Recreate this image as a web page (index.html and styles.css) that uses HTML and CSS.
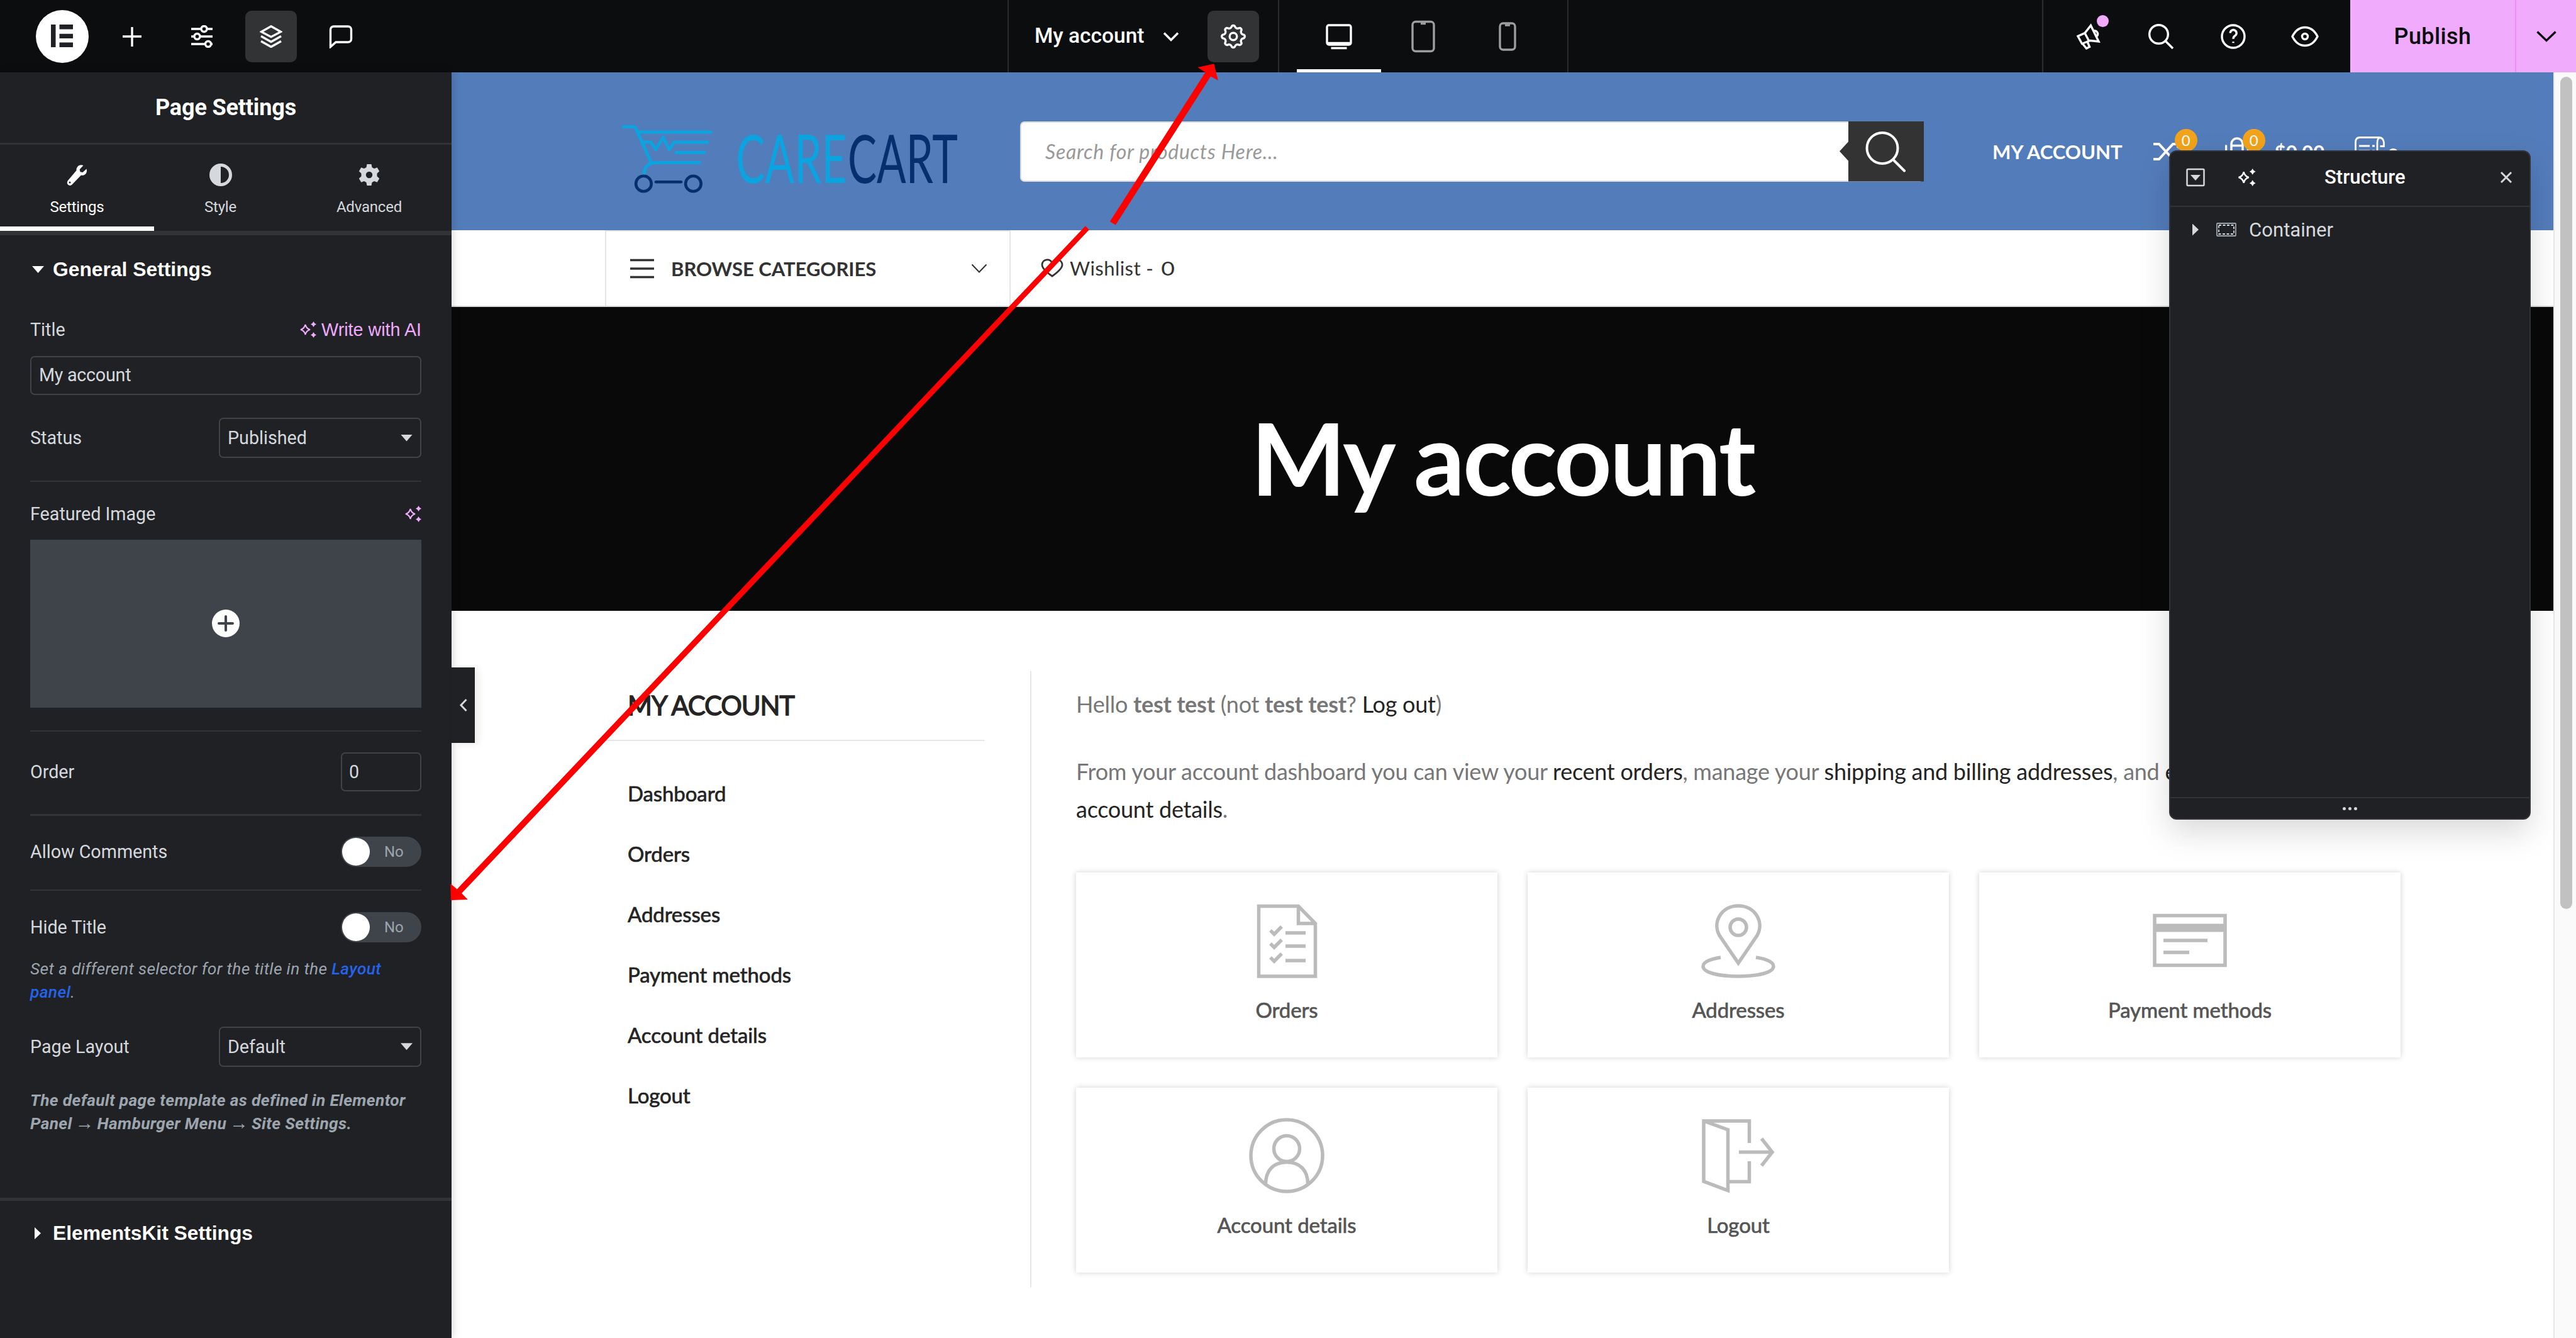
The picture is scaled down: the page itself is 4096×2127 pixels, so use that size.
FILE: index.html
```html
<!DOCTYPE html>
<html lang="en">

<head>
    <meta charset="utf-8">
    <meta name="viewport" content="width=device-width, initial-scale=1.0">
    <title>Elementor | My account</title>
    <link rel="stylesheet" href="styles.css">
</head>

<body>
    <header class="topbar">
        <div class="tools">
            <span class="logo">
                <svg width="84" height="84" viewBox="0 0 84 84"><circle cx="42" cy="42" r="42" fill="#fff"/><path d="M24 23h7.500v36H24zM37.500 23H59v7.500H37.500zM37.500 37.700H59v7.300H37.500zM37.500 51.500H59V59H37.500z" fill="#1f2124"/></svg>
            </span>
            <button class="tool">
                <svg width="36" height="36" viewBox="0 0 36 36"><path d="M18 3v31M3 18h30" class="line"/></svg>
            </button>
            <button class="tool">
                <svg width="36" height="36" viewBox="0 0 36 36"><path d="M1 6h15M27 6h8M1 30h21M32 30h3M1 18h5M16 18h19" class="line"/><circle cx="21.500" cy="6" r="4.500" class="line"/><circle cx="10.500" cy="18" r="4.500" class="line"/><circle cx="28" cy="30" r="4.500" class="line"/></svg>
            </button>
            <button class="tool active">
                <svg width="36" height="36" viewBox="0 0 36 36"><path d="M18 1.800L33.500 10.500 18 18.700 2.500 10.500zM2 17.500l16 9 16-9M2 25.500l16 9 16-9" class="line"/></svg>
            </button>
            <button class="tool">
                <svg width="38" height="38" viewBox="0 0 38 38"><path d="M2.500 35.500V8a5 5 0 0 1 5-5h23a5 5 0 0 1 5 5v15a5 5 0 0 1-5 5H11z" class="line"/></svg>
            </button>
        </div>
        <div class="document">
            <span class="document-name">My account</span>
            <svg width="26" height="16" viewBox="0 0 26 16"><path d="M2 2.500l11 11 11-11" class="line"/></svg>
            <button class="tool active">
                <svg width="42" height="42" viewBox="0 0 42 42"><path d="M18.300 5.300a2.900 2.900 0 0 1 5.400 0 4.300 4.300 0 0 0 6.100 2.500 2.900 2.900 0 0 1 3.900 3.900 4.300 4.300 0 0 0 2.500 6.200 2.900 2.900 0 0 1 0 6.200 4.300 4.300 0 0 0-2.500 6.200 2.900 2.900 0 0 1-3.900 3.900 4.300 4.300 0 0 0-6.100 2.500 2.900 2.900 0 0 1-5.400 0 4.300 4.300 0 0 0-6.100-2.500 2.900 2.900 0 0 1-3.900-3.900 4.300 4.300 0 0 0-2.500-6.200 2.900 2.900 0 0 1 0-6.200 4.300 4.300 0 0 0 2.500-6.200 2.900 2.900 0 0 1 3.900-3.900 4.300 4.300 0 0 0 6.100-2.500z" class="line"/><circle cx="21" cy="21" r="5.800" class="line"/></svg>
            </button>
        </div>
        <div class="devices">
            <button class="device selected">
                <svg width="42" height="42" viewBox="0 0 42 42"><rect x="2" y="3" width="38" height="31" rx="3" class="line"/><path d="M1 31.500h40M8.500 39.500h25" class="line"/></svg>
            </button>
            <button class="device">
                <svg width="38" height="52" viewBox="0 0 38 52"><rect x="2" y="2.500" width="34" height="47" rx="5" class="line"/><path d="M15 5.500h8" class="line"/></svg>
            </button>
            <button class="device">
                <svg width="28" height="46" viewBox="0 0 28 46"><rect x="2" y="2" width="24" height="42" rx="5" class="line"/><path d="M10 5h8" class="line"/></svg>
            </button>
        </div>
        <div class="spacer"></div>
        <div class="actions">
            <button class="tool">
                <svg width="42" height="42" viewBox="0 0 42 42"><path d="M24.500 3.500L37 29 23.500 27.500 10.500 32.500 4 20.500 15 15.500zM15 15.500l6.500 12.500M11.500 32.500l6 7.500 5-2.500-3.500-8.500M29.500 12c5-1 8 5.500 4.500 8.500" class="line"/></svg>
                <i class="notice"></i>
            </button>
            <button class="tool">
                <svg width="40" height="40" viewBox="0 0 40 40"><circle cx="16.500" cy="16.500" r="14.800" class="line"/><path d="M27 27l12 12" class="line"/></svg>
            </button>
            <button class="tool">
                <svg width="40" height="40" viewBox="0 0 40 40"><circle cx="20" cy="20" r="18" class="line"/><path d="M15.200 14.500a5 5 0 1 1 7.800 4.200c-2 1.300-3 2.200-3 5M20 28.300v2" class="line"/></svg>
            </button>
            <button class="tool">
                <svg width="44" height="34" viewBox="0 0 44 34"><path d="M2 17C7 7 14 2.500 22 2.500S37 7 42 17c-5 10-12 14.500-20 14.500S7 27 2 17z" class="line"/><circle cx="22" cy="17" r="4.500" class="line"/></svg>
            </button>
        </div>
        <div class="publish">
            <span class="publish-label">Publish</span>
            <span class="publish-more"><svg width="34" height="20" viewBox="0 0 34 20"><path d="M2.500 2.500l14.500 14 14.500-14" class="line"/></svg></span>
        </div>
    </header>

    <main class="workspace">
        <aside class="panel">
            <h1 class="panel-title">Page Settings</h1>
            <nav class="tabs">
                <div class="tab selected">
                    <svg width="36" height="36" viewBox="0 0 36 36"><path d="M32.500 8.500l-6 5.500-4-.8-.8-4L27.500 3C22 .5 16 4.500 16.500 11L3 27c-4 5 2.500 10.500 6.500 6.500L24 18.500c6 1.500 10.500-4 8.500-10z" fill="#fff"/><circle cx="6" cy="30" r="1.500" fill="#1f2124"/></svg>
                    <span>Settings</span>
                </div>
                <div class="tab">
                    <svg width="36" height="36" viewBox="0 0 36 36"><circle cx="18" cy="18" r="15.500" fill="none" stroke="#d5d8dc" stroke-width="5"/><path d="M18 2a16 16 0 0 0 0 32z" fill="#d5d8dc"/></svg>
                    <span>Style</span>
                </div>
                <div class="tab">
                    <svg width="36" height="36" viewBox="0 0 36 36"><path fill-rule="evenodd" d="M14.500 1h7l1 5 3.500 2 4.700-1.700 3.500 6-3.700 3.400v4.600l3.700 3.400-3.500 6L26 28l-3.500 2-1 5h-7l-1-5-3.500-2-4.700 1.700-3.500-6 3.700-3.400v-4.600L1.800 12.300l3.500-6L10 8l3.500-2zM18 12.800a5.200 5.200 0 1 0 0 10.400 5.200 5.200 0 0 0 0-10.400z" fill="#d5d8dc"/></svg>
                    <span>Advanced</span>
                </div>
            </nav>

            <h2 class="section-title"><i class="arrow-down"></i><span>General Settings</span></h2>
            <div class="controls">
                <div class="row title-row">
                    <label>Title</label>
                    <span class="ai"><svg width="27" height="26" viewBox="0 0 27 26"><path d="M9.500 5q1.500 6.500 7.500 8-6 1.500-7.500 8-1.500-6.500-7.500-8 6-1.500 7.500-8z" fill="none" stroke="#f0abfc" stroke-width="2.200"/><path d="M22.500 0l1.700 2.800L27 4.500l-2.800 1.700L22.500 9l-1.700-2.800L18 4.500l2.800-1.700zM22.500 17l1.700 2.800 2.800 1.700-2.800 1.700-1.700 2.800-1.700-2.800-2.800-1.700 2.800-1.700z" fill="#f0abfc"/></svg><span>Write with AI</span></span>
                </div>
                <div class="field title-field">My account</div>
                <div class="row status-row">
                    <label>Status</label>
                    <div class="field select"><span>Published</span><i class="arrow-down"></i></div>
                </div>
                <hr>
                <div class="row image-row">
                    <label>Featured Image</label>
                    <svg width="27" height="26" viewBox="0 0 27 26"><path d="M9.500 5q1.500 6.500 7.500 8-6 1.500-7.500 8-1.500-6.500-7.500-8 6-1.500 7.500-8z" fill="none" stroke="#f0abfc" stroke-width="2.200"/><path d="M22.500 0l1.700 2.800L27 4.500l-2.800 1.700L22.500 9l-1.700-2.800L18 4.500l2.800-1.700zM22.500 17l1.700 2.800 2.800 1.700-2.800 1.700-1.700 2.800-1.700-2.800-2.800-1.700 2.800-1.700z" fill="#f0abfc"/></svg>
                </div>
                <div class="image-box">
                    <svg width="44" height="44" viewBox="0 0 44 44"><circle cx="22" cy="22" r="22" fill="#fff"/><path d="M22 11v22M11 22h22" stroke="#3f444b" stroke-width="4" stroke-linecap="round"/></svg>
                </div>
                <hr>
                <div class="row order-row">
                    <label>Order</label>
                    <div class="field number">0</div>
                </div>
                <hr>
                <div class="row switch-row">
                    <label>Allow Comments</label>
                    <span class="switch"><i></i>No</span>
                </div>
                <hr>
                <div class="row switch-row">
                    <label>Hide Title</label>
                    <span class="switch"><i></i>No</span>
                </div>
                <p class="description">Set a different selector for the title in the <a>Layout</a><br><a>panel</a>.</p>
                <div class="row layout-row">
                    <label>Page Layout</label>
                    <div class="field select"><span>Default</span><i class="arrow-down"></i></div>
                </div>
                <p class="description strong">The default page template as defined in Elementor<br>Panel <b>→</b> Hamburger Menu <b>→</b> Site Settings.</p>
            </div>
            <h2 class="section-title closed"><i class="arrow-right"></i><span>ElementsKit Settings</span></h2>
        </aside>

        <div class="preview">
            <div class="shop-header">
                <svg class="shop-logo" width="540" height="140" viewBox="0 -14 540 140">
                    <g fill="none" stroke="#0ba3e0" stroke-width="5" stroke-linejoin="round" stroke-linecap="round">
                        <path d="M3 5.500h16q3.500 0 4.500 4l24.500 54"/>
                        <path d="M26 14h116"/>
                        <path d="M34 30h13l7.500 12 12-20 9.500 20 8-12h53"/>
                        <path d="M87 46.500h45M124 62.500H56q-18 0-20 17"/>
                    </g>
                    <g fill="none" stroke="#052f6e" stroke-width="4.600" stroke-linecap="round">
                        <circle cx="35.400" cy="96" r="12.300"/><circle cx="114.400" cy="96" r="12.300"/><path d="M55 93.200h40"/>
                    </g>
                    <g class="care" transform="scale(0.66 1)">
                        <text x="276" y="94.500" textLength="267" lengthAdjust="spacingAndGlyphs" fill="#0ba3e0">CARE</text>
                        <text x="545.500" y="94.500" textLength="265" lengthAdjust="spacingAndGlyphs" fill="#052f6e">CART</text>
                    </g>
                </svg>
                <div class="search">
                    <span class="placeholder">Search for products Here...</span>
                    <span class="search-button"><svg width="66" height="66" viewBox="0 0 66 66"><circle cx="28" cy="27.500" r="24.500" fill="none" stroke="#fff" stroke-width="4"/><path d="M45 45.500l18 18" stroke="#fff" stroke-width="4" stroke-linecap="round"/></svg></span>
                </div>
                <span class="account-link">MY ACCOUNT</span>
                <span class="shop-icon compare">
                    <svg width="48" height="40" viewBox="0 0 48 40"><path d="M0 8h9l22 24h13M0 32h9L31 8h13M38 2l6 6-6 6M38 26l6 6-6 6" fill="none" stroke="#fff" stroke-width="4"/></svg>
                    <b>0</b>
                </span>
                <span class="shop-icon bag">
                    <svg width="38" height="48" viewBox="0 0 38 48"><path d="M1.500 46V13.500M36.500 46V13.500M10 25V12a9 9 0 0 1 18 0v13M10 14.500h18M1.500 46h35" fill="none" stroke="#fff" stroke-width="3.500"/></svg>
                    <b>0</b>
                </span>
                <span class="total">$0.00</span>
                <svg class="quote" width="48" height="48" viewBox="0 0 48 48"><path d="M1.500 46V9q0-7.500 7-7.500h30q7 0 8 8v6h-6M36 46V10q0-7 4-8M7 15h17M7 23h17M7 31h17M28 15h4M28 23h4M28 31h4" fill="none" stroke="#fff" stroke-width="2.800"/></svg>
                <span class="quote-count">0</span>
            </div>
            <div class="shop-nav">
                <div class="categories">
                    <svg width="38" height="32" viewBox="0 0 38 32"><path d="M0 2.500h38M0 16h38M0 29.500h38" stroke="#333" stroke-width="3.500"/></svg>
                    <span>BROWSE CATEGORIES</span>
                    <svg width="26" height="16" viewBox="0 0 26 16"><path d="M1.500 1.500L13 13.500l11.500-12" fill="none" stroke="#333" stroke-width="2"/></svg>
                </div>
                <div class="wishlist">
                    <svg width="36" height="30" viewBox="0 0 36 30"><path d="M18 28C8 21 2 15.500 2 10c0-9 12-11 16-3 4-8 16-6 16 3 0 5.500-6 11-16 18z" fill="none" stroke="#333" stroke-width="2.800"/></svg>
                    <span>Wishlist - <b>0</b></span>
                </div>
            </div>
            <div class="hero">My account</div>
            <div class="account">
                <div class="account-menu">
                    <h3>MY ACCOUNT</h3>
                    <a>Dashboard</a>
                    <a>Orders</a>
                    <a>Addresses</a>
                    <a>Payment methods</a>
                    <a>Account details</a>
                    <a>Logout</a>
                </div>
                <div class="account-content">
                    <p>Hello <strong>test test</strong> (not <strong>test test</strong>? <a>Log out</a>)</p>
                    <p>From your account dashboard you can view your <a>recent orders</a>, manage your <a>shipping and billing addresses</a>, and <a>edit your password and<br>account details</a>.</p>
                    <div class="cards">
                        <div class="card">
                            <svg width="122" height="122" viewBox="0 0 122 122"><path d="M16.500 5.500h63L106.500 33v84h-90zM79.500 6v27h27M59 48h32M59 69h32M59 92h32M35 44l6 6 12-12M35 65l6 6 12-12M35 87l6 6 12-12"/></svg>
                            Orders
                        </div>
                        <div class="card">
                            <svg width="122" height="122" viewBox="0 0 122 122"><path d="M61 96Q42 68 31 52c-12-22 4-47 30-47s42 25 30 47Q80 68 61 96zM33 87C14 90 5 95 5 101c0 10 24 16 56 16s56-6 56-16c0-6-9-11-28-14"/><circle cx="61" cy="39" r="13"/></svg>
                            Addresses
                        </div>
                        <div class="card">
                            <svg width="122" height="122" viewBox="0 0 122 122"><path d="M5 20.500h112v79H5zM19 60h70M19 79h41"/><path d="M5 40h112" stroke-width="13"/></svg>
                            Payment methods
                        </div>
                        <div class="card">
                            <svg width="122" height="122" viewBox="0 0 122 122"><circle cx="61" cy="60" r="57"/><circle cx="61" cy="49" r="20.500"/><path d="M27.500 105c0-22 13-34.500 33.500-34.500S94.500 83 94.500 105"/></svg>
                            Account details
                        </div>
                        <div class="card">
                            <svg width="122" height="122" viewBox="0 0 122 122"><path d="M78.500 40V5H6v96l38.500 14.500V19L6 5M44.500 101.500h34V69M62 54.500h52M98 33l17 21.500-17 21.500"/></svg>
                            Logout
                        </div>
                    </div>
                </div>
            </div>
        </div>
        <div class="scrollbar"><i></i></div>
    </main>

    <div class="collapse"><svg width="14" height="22" viewBox="0 0 14 22"><path d="M11.500 2L3 11l8.500 9" fill="none" stroke="#d5d8dc" stroke-width="3"/></svg></div>

    <section class="structure">
        <div class="structure-header">
            <svg width="30" height="30" viewBox="0 0 30 30"><rect x="1.500" y="2" width="27" height="26" rx="1.500" fill="none" stroke="#d5d8dc" stroke-width="2.500"/><path d="M7 11h16l-8 9z" fill="#d5d8dc"/></svg>
            <svg width="30" height="28" viewBox="0 0 27 26"><path d="M9.500 5q1.500 6.500 7.500 8-6 1.500-7.500 8-1.500-6.500-7.500-8 6-1.500 7.500-8z" fill="none" stroke="#fff" stroke-width="2.200"/><path d="M22.500 0l1.700 2.800L27 4.500l-2.800 1.700L22.500 9l-1.700-2.800L18 4.500l2.800-1.700zM22.500 17l1.700 2.800 2.800 1.700-2.800 1.700-1.700 2.800-1.700-2.800-2.800-1.700 2.800-1.700z" fill="#fff"/></svg>
            <span class="structure-title">Structure</span>
            <svg width="20" height="20" viewBox="0 0 20 20"><path d="M2 2l16 16M18 2L2 18" stroke="#d5d8dc" stroke-width="3"/></svg>
        </div>
        <div class="structure-row">
            <i class="arrow-right"></i>
            <svg width="32" height="22" viewBox="0 0 32 22"><rect x="1" y="1" width="30" height="20" rx="1" fill="none" stroke="#9da5ae" stroke-width="1.800"/><rect x="4" y="4" width="24" height="14" fill="none" stroke="#d5d8dc" stroke-width="1.800" stroke-dasharray="4 2.500"/></svg>
            <span>Container</span>
        </div>
        <div class="structure-footer"><i></i><i></i><i></i></div>
    </section>

    <svg class="arrows" width="4096" height="2127" viewBox="0 0 4096 2127">
        <path d="M1930.300 101.500L1936.800 127.800 1925 121.500 1773.900 357.600 1764.800 352.300 1916.500 115 1904.300 107.100z"/>
        <path d="M716.900 1431L716.300 1404.800 726.700 1413.400 1725.800 359.200 1731.800 365.200 734.100 1420 743.800 1430z"/>
    </svg>
</body>

</html>
```
FILE: styles.css
```css
* {
    box-sizing: border-box;
}

body {
    margin: 0;
    width: 4096px;
    height: 2127px;
    overflow: hidden;
    position: relative;
    background-color: #fff;
    font-family: Roboto, sans-serif;
    font-size: 28.7px;
    color: #d5d8dc;
}

h1, h2, h3, p {
    margin: 0;
}

button {
    padding: 0;
    border: 0;
    background: none;
    color: inherit;
}

svg {
    display: block;
    flex: none;
}

.line {
    fill: none;
    stroke: currentColor;
    stroke-width: 3.4;
}

/* top bar */

.topbar {
    display: grid;
    grid-template-columns: 1602px 430px 462px 1fr 490px 359px;
    height: 115px;
    background-color: #0c0d0e;
    color: #fff;
}

.tools {
    display: flex;
    align-items: center;
    gap: 28.4px;
    padding-left: 57px;
}

.tool {
    position: relative;
    display: flex;
    justify-content: center;
    align-items: center;
    width: 82px;
    height: 82px;
    border-radius: 10px;
}

.tool.active {
    background-color: #323335;
}

.document {
    display: flex;
    align-items: center;
    padding-left: 41px;
    border-left: 2px solid #2b2c2e;
}

.document-name {
    font-size: 33.5px;
    font-weight: 500;
    line-height: 38px;
    margin-right: 29px;
    margin-bottom: 2px;
}

.document .tool {
    margin-left: 45px;
}

.devices {
    display: flex;
    padding-left: 28px;
    border-left: 2px solid #2b2c2e;
    border-right: 2px solid #2b2c2e;
}

.device {
    display: flex;
    justify-content: center;
    align-items: center;
    width: 134px;
    height: 115px;
    color: #9d9e9f;
    border-bottom: 5px solid transparent;
    border-top: 5px solid transparent;
}

.device.selected {
    color: #fff;
    border-bottom-color: #fff;
}

.actions {
    display: flex;
    align-items: center;
    gap: 32.8px;
    padding-left: 31px;
    border-left: 2px solid #2b2c2e;
}

.notice {
    position: absolute;
    top: 7px;
    right: 9px;
    width: 19px;
    height: 19px;
    border-radius: 50%;
    background-color: #f0abfc;
}

.publish {
    display: grid;
    grid-template-columns: 262px 97px;
    background-color: #f0abfc;
    color: #0c0d0e;
}

.publish-label {
    justify-self: center;
    align-self: center;
    font-size: 36px;
    font-weight: 500;
    letter-spacing: 0.4px;
}

.publish-more {
    display: flex;
    justify-content: center;
    align-items: center;
    border-left: 2px solid #eb8efb;
}

/* left panel */

.workspace {
    display: grid;
    grid-template-columns: 718px 3342px 36px;
    height: 2012px;
}

.panel {
    position: relative;
    background-color: #1f2124;
    box-shadow: 2px 0 14px rgba(0, 0, 0, 0.15);
}

.panel-title {
    display: flex;
    justify-content: center;
    align-items: center;
    height: 115px;
    border-bottom: 3px solid #313336;
    font-size: 36px;
    font-weight: 700;
    letter-spacing: -0.15px;
    color: #fff;
}

.tabs {
    display: grid;
    grid-template-columns: 245px 211px 262px;
    height: 144px;
    border-bottom: 7px solid #313336;
    font-size: 24px;
    letter-spacing: -0.2px;
}

.tab {
    display: flex;
    flex-direction: column;
    align-items: center;
    gap: 19px;
    padding-top: 30px;
    line-height: 28px;
    border-bottom: 7px solid transparent;
}

.tab.selected {
    color: #fff;
    border-bottom-color: #fff;
}

.section-title {
    display: flex;
    align-items: center;
    height: 109px;
    padding-left: 51px;
    font-family: "Liberation Sans", Arial, sans-serif;
    font-size: 31.8px;
    font-weight: 700;
    color: #fff;
}

.section-title.closed {
    margin-top: 98px;
    border-top: 5px solid #313336;
}

.arrow-down {
    width: 19px;
    height: 11px;
    background-color: currentColor;
    clip-path: polygon(0 0, 100% 0, 50% 100%);
}

.arrow-right {
    width: 10px;
    height: 19px;
    background-color: currentColor;
    clip-path: polygon(0 0, 100% 50%, 0 100%);
}

.section-title .arrow-down {
    margin-right: 14px;
}

.section-title .arrow-right {
    margin-left: 4px;
    margin-right: 19px;
}

.controls {
    padding: 24px 48px 0;
}

.controls hr {
    margin: 36px 0 33.3px;
    border: 0;
    height: 2.4px;
    background-color: #313336;
}

.row {
    display: flex;
    justify-content: space-between;
    align-items: center;
    line-height: 34px;
}

.ai {
    display: flex;
    align-items: center;
    gap: 8px;
    font-family: "Liberation Sans", Arial, sans-serif;
    color: #f0abfc;
}

.field {
    display: flex;
    align-items: center;
    height: 62px;
    padding: 0 12px;
    border: 2.4px solid #3f444b;
    border-radius: 7px;
}

.title-field {
    margin-top: 24.5px;
    line-height: 34px;
    padding-bottom: 2px;
    letter-spacing: -0.25px;
}

.status-row {
    margin-top: 36.5px;
}

.select {
    justify-content: space-between;
    width: 322px;
    height: 64px;
}

.image-box {
    display: flex;
    justify-content: center;
    align-items: center;
    height: 267px;
    margin-top: 24px;
    background-color: #3f444b;
}

.number {
    width: 128px;
    padding-left: 11px;
}

.switch {
    display: flex;
    align-items: center;
    width: 128px;
    height: 48px;
    padding-left: 2px;
    border-radius: 24px;
    background-color: #3f444b;
    font-size: 24px;
    color: #9da5ae;
}

.switch i {
    width: 43.5px;
    height: 43.5px;
    margin-right: 23.5px;
    border-radius: 50%;
    background-color: #fff;
}

.description {
    margin-top: 24px;
    font-size: 26.35px;
    line-height: 37.2px;
    letter-spacing: 0.34px;
    font-style: italic;
    color: #9da5ae;
}

.description a {
    color: #2563eb;
    font-weight: 500;
}

.description.strong {
    margin-top: 35.5px;
    font-weight: 700;
}

.description b {
    font-family: "Liberation Sans", Arial, sans-serif;
    font-size: 30px;
    line-height: 0;
    font-style: normal;
    font-weight: 400;
    margin: 0 -2px;
}

.layout-row {
    margin-top: 35.5px;
}

/* page preview */

.shop-header {
    display: flex;
    align-items: center;
    height: 251px;
    padding-left: 270px;
    background-color: #537cba;
    font-family: Lato, sans-serif;
    font-size: 31.1px;
    font-weight: 700;
    color: #fff;
}

.shop-logo {
    margin-top: 23px;
    margin-right: 94px;
    overflow: visible;
}

.care {
    font-family: Lato, sans-serif;
    font-size: 106px;
    font-weight: 400;
}

.search {
    display: flex;
    align-items: center;
    justify-content: space-between;
    width: 1437px;
    height: 96px;
    padding-left: 38px;
    border: 2.4px solid #dcdcdc;
    border-right: 0;
    border-radius: 7px;
    background-color: #fff;
}

.placeholder {
    font-size: 32px;
    font-weight: 400;
    font-style: italic;
    letter-spacing: 0.72px;
    color: #999;
}

.search-button {
    display: flex;
    justify-content: center;
    align-items: center;
    width: 134px;
    height: 96px;
    padding-left: 12px;
    background-color: #333;
    clip-path: polygon(14px 0, 100% 0, 100% 100%, 14px 100%, 14px 66%, 0 50%, 14px 34%);
}

.account-link {
    margin-left: 109px;
}

.shop-icon {
    position: relative;
    margin-left: 49px;
}

.shop-icon b {
    position: absolute;
    top: -16px;
    right: -22px;
    width: 36px;
    height: 36px;
    border-radius: 50%;
    background-color: #f2a31b;
    font-size: 24px;
    font-weight: 400;
    line-height: 36px;
    text-align: center;
}

.shop-icon.bag {
    margin-left: 66px;
}

.bag b {
    top: -12px;
    right: -26px;
}

.total {
    margin-left: 41px;
}

.quote {
    margin-left: 48px;
}

.quote-count {
    margin-top: 10px;
    margin-left: 4px;
}

.shop-nav {
    display: flex;
    height: 122px;
    padding-left: 244px;
    border-bottom: 2px solid #d8dada;
    font-family: Lato, sans-serif;
    font-size: 31.1px;
    color: #333;
}

.categories {
    display: flex;
    align-items: center;
    width: 645px;
    padding-left: 38px;
    border: 2.4px solid #e5e7e7;
    border-bottom: 0;
    font-weight: 700;
    letter-spacing: -0.08px;
}

.categories span {
    flex: 1;
    margin-left: 27px;
}

.categories svg:last-child {
    margin-right: 35px;
}

.wishlist {
    display: flex;
    align-items: center;
    gap: 10px;
    padding-left: 48px;
    letter-spacing: 0.4px;
}

.wishlist b {
    display: inline-block;
    margin-left: 5px;
    font-weight: 400;
    transform: scaleX(1.2);
}

.hero {
    display: flex;
    justify-content: center;
    align-items: center;
    height: 483px;
    padding-bottom: 7px;
    background-color: #090909;
    font-family: Lato, sans-serif;
    font-size: 160px;
    font-weight: 700;
    letter-spacing: -3.2px;
    color: #fff;
}

.account {
    display: grid;
    grid-template-columns: 602px 2179px;
    column-gap: 73px;
    padding: 96px 0 0 245px;
    font-family: Lato, sans-serif;
    color: #242424;
}

.account-menu h3 {
    height: 111px;
    padding: 28.5px 0 0 35px;
    margin-bottom: 36px;
    border-bottom: 2.4px solid #e5e7e7;
    font-size: 42px;
    line-height: 50px;
    font-weight: 400;
    letter-spacing: -1.2px;
    -webkit-text-stroke: 1.3px;
}

.account-menu a {
    display: block;
    padding-left: 35px;
    font-size: 33px;
    line-height: 95.9px;
    letter-spacing: -0.1px;
    -webkit-text-stroke: 0.7px;
}

.account-content {
    height: 979px;
    padding: 23px 0 0 71px;
    border-left: 2.4px solid #e5e7e7;
    font-size: 36px;
    line-height: 59.8px;
    letter-spacing: -0.26px;
    color: #777;
}

.account-content p {
    margin-bottom: 47.5px;
}

.account-content a {
    color: #242424;
}

.cards {
    display: grid;
    grid-template-columns: repeat(3, 670px);
    grid-auto-rows: 294px;
    gap: 48px;
    margin-top: 70px;
    letter-spacing: -0.1px;
}

.card {
    display: flex;
    flex-direction: column;
    align-items: center;
    padding-top: 48px;
    box-shadow: 0 0 9px rgba(0, 0, 0, 0.18);
    font-size: 33px;
    line-height: 40px;
    color: #555;
    -webkit-text-stroke: 0.7px;
}

.card svg {
    margin-bottom: 28px;
    fill: none;
    stroke: #bbb;
    stroke-width: 5.5;
}

.scrollbar {
    padding: 7px 0 0 9px;
    border-left: 2px solid #e8e8e8;
    background-color: #fafafa;
}

.scrollbar i {
    display: block;
    width: 19px;
    height: 1323px;
    border-radius: 10px;
    background-color: #c1c1c1;
}

/* things floating over the page */

.collapse {
    position: absolute;
    left: 718px;
    top: 1061px;
    display: flex;
    justify-content: center;
    align-items: center;
    width: 37px;
    height: 120px;
    background-color: #1f2124;
    box-shadow: 6px 2px 12px rgba(0, 0, 0, 0.08);
}

.structure {
    position: absolute;
    left: 3449px;
    top: 239px;
    display: flex;
    flex-direction: column;
    width: 575px;
    height: 1064px;
    border: 2.4px solid #313336;
    border-radius: 12px;
    background-color: #1f2124;
    box-shadow: 0 20px 50px rgba(0, 0, 0, 0.15);
    font-size: 31.1px;
    color: #d5d8dc;
}

.structure-header {
    display: flex;
    align-items: center;
    gap: 51px;
    height: 88px;
    padding: 0 27px 5px 25px;
    border-bottom: 2.4px solid #313336;
    font-weight: 500;
    color: #fff;
}

.structure-title {
    flex: 1;
    padding-left: 58px;
}

.structure-row {
    display: flex;
    align-items: center;
    height: 72px;
    padding-left: 35px;
}

.structure-row svg {
    margin: 0 20px 0 28px;
}

.structure-footer {
    display: flex;
    justify-content: center;
    align-items: center;
    gap: 4px;
    height: 34px;
    margin-top: auto;
    border-top: 2.4px solid #313336;
}

.structure-footer i {
    width: 5px;
    height: 5px;
    border-radius: 50%;
    background-color: #d5d8dc;
}

.arrows {
    position: absolute;
    left: 0;
    top: 0;
    fill: #fe0000;
}
```
